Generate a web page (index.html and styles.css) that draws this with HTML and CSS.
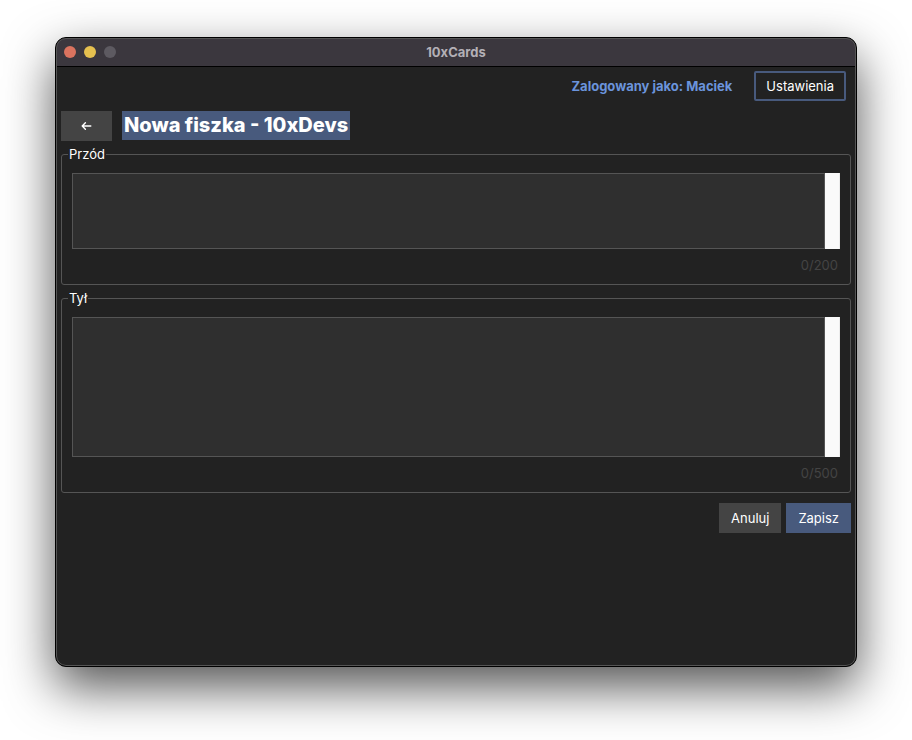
FILE: index.html
```html
<!DOCTYPE html>
<html lang="pl">
<head>
  <meta charset="utf-8">
  <title>10xCards</title>
  <link rel="stylesheet" href="styles.css">
</head>
<body>
  <div class="window">
    <header class="titlebar">
      <div class="lights">
        <span class="light light-close"></span>
        <span class="light light-minimize"></span>
        <span class="light light-zoom"></span>
      </div>
      <span class="titlebar-text">10xCards</span>
    </header>
    <div class="userbar">
      <span class="user">Zalogowany jako: Maciek</span>
      <button class="button button-outline" type="button">Ustawienia</button>
    </div>
    <main class="content">
      <div class="heading">
        <button class="button button-back" type="button" aria-label="Wstecz">
          <svg class="arrow" viewBox="0 0 11 12" aria-hidden="true"><path d="M9.8 6H1.2M4.4 2.8L1.2 6l3.2 3.2"/></svg>
        </button>
        <h1 class="title">Nowa fiszka - 10xDevs</h1>
      </div>
      <form class="form">
        <fieldset class="group">
          <legend class="legend"><label for="front">Przód</label></legend>
          <div class="editor editor-front">
            <textarea class="text" id="front"></textarea>
            <div class="scrollbar"></div>
          </div>
          <p class="counter">0/200</p>
        </fieldset>
        <fieldset class="group">
          <legend class="legend"><label for="back">Tył</label></legend>
          <div class="editor editor-back">
            <textarea class="text" id="back"></textarea>
            <div class="scrollbar"></div>
          </div>
          <p class="counter">0/500</p>
        </fieldset>
        <div class="actions">
          <button class="button" type="button">Anuluj</button>
          <button class="button button-primary" type="button">Zapisz</button>
        </div>
      </form>
    </main>
  </div>
</body>
</html>
```
FILE: styles.css
```css
* {
  box-sizing: border-box;
}

body {
  display: flex;
  min-height: 100vh;
  margin: 0;
  padding: 37px 55px 73px;
  background: #fff;
  color: #fff;
  font: 13px/16px Inter, "Liberation Sans", sans-serif;
}

.window {
  position: relative;
  flex: 1;
  min-width: 0;
  border: 1px solid #000;
  border-radius: 11px;
  background: #222;
  overflow: hidden;
  box-shadow: 0 20px 50px rgba(0, 0, 0, 0.68);
}

/* Light hairline just inside the window edge */
.window::after {
  content: "";
  position: absolute;
  inset: 0;
  border: 1px solid #555;
  border-radius: 10px;
  pointer-events: none;
}

.titlebar {
  display: grid;
  grid-template-columns: 1fr auto 1fr;
  align-items: center;
  height: 29px;
  padding: 0 8px;
  border-bottom: 1px solid #000;
  background: #3b373e;
}

.lights {
  display: flex;
  gap: 8px;
}

.light {
  width: 12px;
  height: 12px;
  border-radius: 50%;
}

.light-close {
  background: #da735f;
}

.light-minimize {
  background: #e5c04f;
}

.light-zoom {
  background: #5d5a61;
}

.titlebar-text {
  color: #b3b0b6;
  font-weight: 700;
}

.userbar {
  display: flex;
  justify-content: flex-end;
  align-items: center;
  gap: 22px;
  padding: 4px 10px 10px;
}

.user {
  color: #6b94dc;
  font-weight: 700;
}

.button {
  height: 30px;
  padding: 0 12px;
  border: 0;
  border-radius: 0;
  background: #444;
  color: #fff;
  font: inherit;
}

.button-outline {
  padding: 0 10px;
  border: 2px solid #485a7d;
  border-radius: 2px;
  background: transparent;
}

.button-primary {
  background: #485a7d;
}

.button-back {
  display: flex;
  justify-content: center;
  align-items: center;
  width: 51px;
}

.arrow {
  width: 11px;
  height: 12px;
  fill: none;
  stroke: #fff;
  stroke-width: 1.4;
  stroke-linecap: round;
  stroke-linejoin: round;
}

.content {
  padding: 0 5px;
}

.heading {
  display: flex;
  align-items: flex-start;
  gap: 10px;
}

.title {
  margin: 0;
  padding: 0 2px;
  background: #485a7d;
  font-size: 20px;
  line-height: 29px;
  font-weight: 800;
}

.group {
  min-width: 0;
  margin: 5px 0 0;
  padding: 11px 10px;
  border: 1px solid #555;
  border-radius: 3px;
}

.legend {
  margin-left: -4px;
  padding: 0 1px;
}

.editor {
  display: flex;
}

.editor-front {
  height: 76px;
}

.editor-back {
  height: 140px;
}

.text {
  flex: 1;
  min-width: 0;
  margin: 0;
  padding: 4px;
  border: 1px solid #555;
  border-radius: 0;
  outline: 0;
  background: #2f2f2f;
  color: #fff;
  font: inherit;
  resize: none;
}

.scrollbar {
  width: 15px;
  border-right: 1px solid #ececec;
  background: #fafafa;
}

.counter {
  margin: 8px 2px 0;
  color: #444;
  text-align: right;
}

.actions {
  display: flex;
  justify-content: flex-end;
  gap: 5px;
  margin-top: 10px;
}
```
